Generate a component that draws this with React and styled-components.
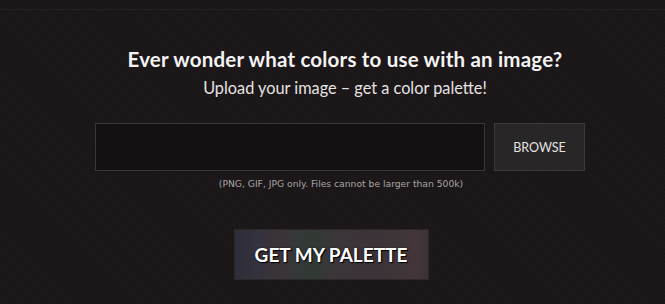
import React from "react";
import styled, { createGlobalStyle } from "styled-components";

const GlobalStyle = createGlobalStyle`
  body {
    margin: 0;
    background: #1b1718;
    font-family: Lato, "Open Sans", sans-serif;
  }
`;

const Page = styled.div`
  width: 665px;
  height: 304px;
  background-color: #1b1718;
  background-image: repeating-linear-gradient(
      45deg,
      rgba(255, 255, 255, 0.012) 0 1px,
      transparent 1px 3px
    );
  border-top: 1px solid #262223;
  margin-top: 9px;
  box-sizing: border-box;
  display: flex;
  flex-direction: column;
  align-items: center;
  overflow: hidden;
`;

const Title = styled.h1`
  margin: 37px 0 0 0;
  padding-left: 25px;
  color: #f4f2f2;
  font-size: 20.5px;
  font-weight: 700;
  letter-spacing: 0.2px;
  line-height: 25px;
`;

const Subtitle = styled.p`
  margin: 6px 0 0 0;
  padding-left: 25px;
  color: #e6e3e3;
  font-size: 16.3px;
  line-height: 20px;
`;

const UploadRow = styled.div`
  display: flex;
  gap: 9px;
  margin-top: 25px;
  margin-left: 15px;
`;

const FileBox = styled.div`
  width: 388px;
  height: 46px;
  background: #131112;
  border: 1px solid #3a3737;
`;

const Browse = styled.button`
  width: 91px;
  height: 48px;
  background: #282626;
  border: 1px solid #3b3939;
  color: #e4e2e2;
  font-family: Lato, sans-serif;
  font-size: 12.5px;
  cursor: pointer;
`;

const Hint = styled.p`
  margin: 7px 0 0 0;
  padding-left: 17px;
  color: #a8a4a4;
  font-family: "DejaVu Sans", Verdana, sans-serif;
  font-size: 9.2px;
  line-height: 12px;
`;

const PaletteButton = styled.button`
  margin-top: 39px;
  margin-left: -3px;
  width: 195px;
  height: 51px;
  border: 1px solid #2c2729;
  background: linear-gradient(
    90deg,
    #2e2c38 0%,
    #34323c 12%,
    #3b3339 22%,
    #35383a 32%,
    #313a33 40%,
    #3a363a 50%,
    #3d3439 60%,
    #3b3338 72%,
    #3e3539 84%,
    #44353a 94%,
    #3a3236 100%
  );
  color: #ffffff;
  font-family: Lato, sans-serif;
  font-size: 19px;
  font-weight: 700;
  text-shadow: 1px 1px 1px #000000, 0 0 2px rgba(0, 0, 0, 0.6);
  cursor: pointer;
`;

export default function App() {
  return (
    <>
      <GlobalStyle />
      <Page>
        <Title>Ever wonder what colors to use with an image?</Title>
        <Subtitle>Upload your image – get a color palette!</Subtitle>
        <UploadRow>
          <FileBox />
          <Browse>BROWSE</Browse>
        </UploadRow>
        <Hint>(PNG, GIF, JPG only. Files cannot be larger than 500k)</Hint>
        <PaletteButton>GET MY PALETTE</PaletteButton>
      </Page>
    </>
  );
}
